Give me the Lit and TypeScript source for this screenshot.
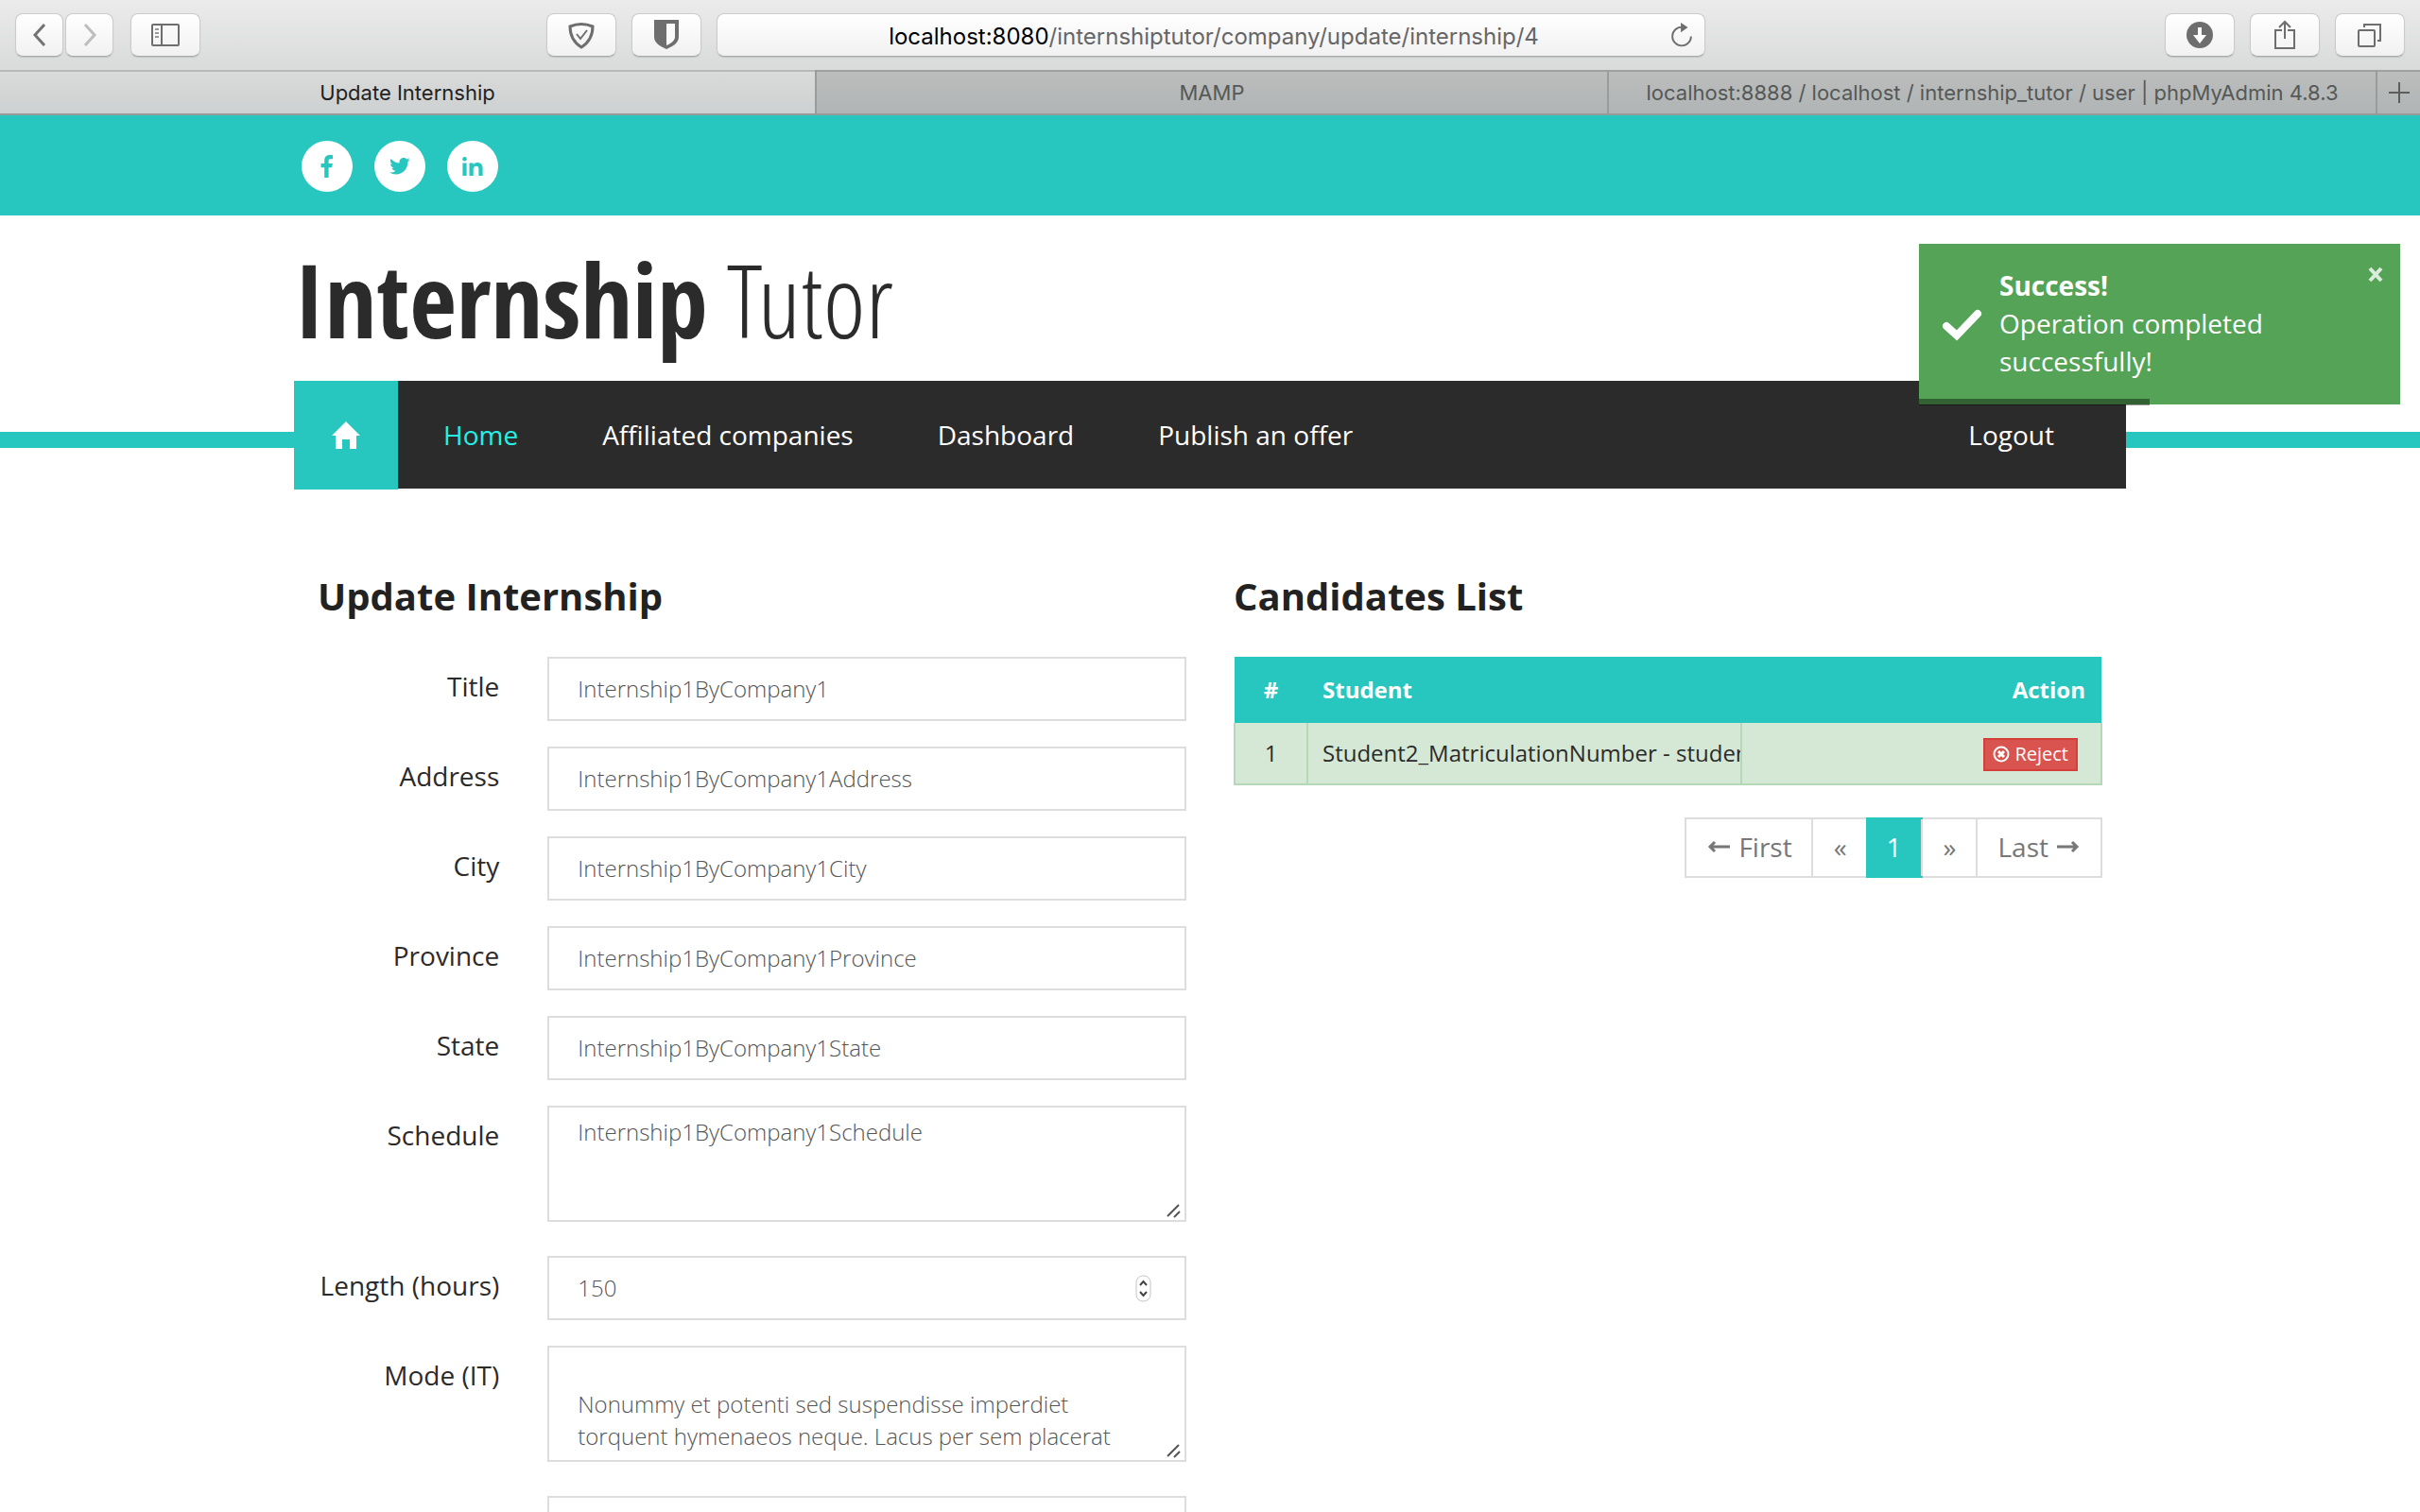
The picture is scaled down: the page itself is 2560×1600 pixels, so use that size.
import { LitElement, html, css, svg } from "lit";
import { customElement } from "lit/decorators.js";
import { classMap } from "lit/directives/class-map.js";

const stroke = (content: unknown, label: string, size = 34) => html`<svg
  class="icon" width=${size} height=${size} viewBox="0 0 34 34" fill="none"
  stroke="#6e6e6e" stroke-width="2" role="img" aria-label=${label}>${content}</svg>`;

@customElement("browser-bar")
class BrowserBar extends LitElement {
  static styles = css`
    :host { display: block; flex: none; font-family: Inter, "Liberation Sans", sans-serif; }
    .toolbar {
      display: grid; grid-template-columns: 562fr 1226fr 740fr; align-items: center;
      height: 76px; box-sizing: border-box; padding: 0 16px;
      background: linear-gradient(#ebebeb, #d9dada); border-bottom: 2px solid #b7b9b8;
    }
    .group { display: flex; gap: 16px; }
    .end { justify-content: flex-end; }
    .pair { display: flex; gap: 2px; margin-right: 2px; }
    .tool, .address {
      height: 46px; box-sizing: border-box; border: 1px solid #cbcbcb; border-bottom-color: #a9a9a9;
      border-radius: 8px; background: linear-gradient(#fff, #f1f1f1);
      box-shadow: 0 1px 1px rgba(0, 0, 0, 0.12);
    }
    .tool { width: 74px; padding: 0; display: grid; place-items: center; }
    .narrow { width: 51px; }
    .address { flex: 1; display: flex; align-items: center; padding: 2px 8px 0 46px; }
    .url { flex: 1; text-align: center; font-size: 24px; color: #666; white-space: nowrap; }
    .host { color: #000; }
    .reload { border: 0; background: none; padding: 0; display: grid; }
    .tabs { display: grid; grid-template-columns: 862fr 838fr 813fr 47fr; height: 46px; border-bottom: 2px solid #979a99; box-sizing: border-box; }
    .tab {
      display: grid; place-items: center; font-size: 22px; color: #555857; text-decoration: none;
      background: linear-gradient(#bcbebd, #b0b4b4); border-left: 2px solid #999c9b;
      white-space: nowrap; overflow: hidden; border-top: 0; border-right: 0; border-bottom: 0; padding: 0;
      margin-top: -2px; padding-top: 2px; box-shadow: inset 0 2px #9fa1a0;
    }
    .current { background: linear-gradient(#d9dada, #ced1d1); color: #222; border-left: 0; box-shadow: none; margin-top: 0; padding-top: 0; }
  `;
  render() {
    return html`
      <div class="toolbar">
        <div class="group">
          <div class="pair">
            <button class="tool narrow" aria-label="Back"><svg width="20" height="28" viewBox="0 0 20 28" fill="none" stroke="#737373" stroke-width="3"><path d="M15 3 5 14l10 11" /></svg></button>
            <button class="tool narrow" aria-label="Forward"><svg width="20" height="28" viewBox="0 0 20 28" fill="none" stroke="#bdbdbd" stroke-width="3"><path d="M5 3l10 11L5 25" /></svg></button>
          </div>
          <button class="tool">${stroke(svg`<rect x="3" y="6" width="28" height="22" rx="1" /><path d="M13 6v22" /><path d="M6 11h4M6 15h4M6 19h4" stroke="#999" />`, "Sidebar")}</button>
        </div>
        <div class="group">
          <button class="tool">${stroke(svg`<path d="M5 8Q17 3 29 8C29 17 25 25 17 30 9 25 5 17 5 8z" stroke-width="3" /><path d="M12 16l4 5 7-9" />`, "Privacy")}</button>
          <button class="tool">${stroke(svg`<path d="M4 1h26v18c0 6-6 10-13 13C10 29 4 25 4 19z" fill="#6e6e6e" stroke="none" /><path d="M17 5h9v14c0 4-4 7-9 9z" fill="#fafafa" stroke="none" />`, "Blocker")}</button>
          <div class="address">
            <span class="url"><span class="host">localhost:8080</span>/internshiptutor/company/update/internship/4</span>
            <button class="reload">${stroke(svg`<path d="M17 7A10.500 10.500 0 1 0 27.500 17.500" /><path d="M16 2v11l8-5.500z" fill="#6e6e6e" stroke="none" />`, "Reload", 32)}</button>
          </div>
        </div>
        <div class="group end">
          <button class="tool">${stroke(svg`<circle cx="17" cy="17" r="14" fill="#6e6e6e" stroke="none" /><path d="M15 9h4v8h5l-7 9-7-9h5z" fill="#fff" stroke="none" />`, "Downloads")}</button>
          <button class="tool">${stroke(svg`<path d="M14 12H7v19h20V12h-7" /><path d="M17 21V3M11 9l6-6 6 6" />`, "Share")}</button>
          <button class="tool">${stroke(svg`<rect x="5" y="12" width="17" height="17" rx="1" /><path d="M11 9V6h17v17h-3" />`, "Show tabs")}</button>
        </div>
      </div>
      <nav class="tabs">
        <a class="tab current" href="#">Update Internship</a>
        <a class="tab" href="#">MAMP</a>
        <a class="tab" href="#">localhost:8888 / localhost / internship_tutor / user | phpMyAdmin 4.8.3</a>
        <button class="tab" aria-label="New tab"><svg width="24" height="24" viewBox="0 0 24 24" stroke="#5c5e5d" stroke-width="2"><path d="M12 1v22M1 12h22" /></svg></button>
      </nav>`;
  }
}

@customElement("site-header")
class SiteHeader extends LitElement {
  static styles = css`
    :host { display: block; }
    .wrap { box-sizing: border-box; max-width: 1938px; margin: 0 auto; }
    .social { background: #27c6bf; }
    .links { display: flex; gap: 23px; padding: 27px 8px 25px; }
    .link { width: 54px; height: 54px; border-radius: 50%; background: #fff; display: grid; place-items: center; }
    .logo {
      display: block; box-sizing: border-box; height: 175px; line-height: 178px; white-space: nowrap;
      font-family: "Open Sans Condensed Light", "OpenSans-CondensedLight", "Open Sans Light Condensed", "Liberation Sans Narrow", sans-serif;
      font-size: 108px; font-weight: 300; color: #2b2b2b; text-decoration: none;
    }
    .strong { font-family: "Open Sans Condensed", "Liberation Sans Narrow", sans-serif; font-weight: 700; }
    .band { background: linear-gradient(#27c6bf, #27c6bf) 0 54px / 100% 17px no-repeat; }
    .menu { display: flex; align-items: stretch; height: 114px; background: #2b2b2b; }
    .home { width: 110px; height: 115px; background: #27c6bf; display: grid; place-items: center; margin-right: 48px; }
    .item { color: #fff; text-decoration: none; font-size: 28px; line-height: 114px; margin-right: 89px; white-space: nowrap; }
    .active { color: #24f0e6; }
    .last { margin: 0 76px 0 auto; }
  `;
  render() {
    const items = ["Home", "Affiliated companies", "Dashboard", "Publish an offer"];
    return html`
      <div class="social"><div class="wrap links">
        <a class="link" href="#" aria-label="Facebook"><svg width="14" height="24" viewBox="0 0 14 24" fill="#27c6bf"><path d="M13 0.200v4h-2.300C9 4.200 8.600 5 8.600 6.200V9h4.200l-.6 4.200H8.600V24H4.200V13.200H.5V9h3.700V5.800C4.200 2.100 6.400 0 9.800 0c1.500 0 2.800.1 3.200.2z" /></svg></a>
        <a class="link" href="#" aria-label="Twitter"><svg width="22" height="18" viewBox="0 0 22 18" fill="#27c6bf"><path d="M21.500 2.200c-.6.900-1.300 1.600-2.200 2.200v.6c0 5.800-4.400 12.500-12.500 12.500-2.500 0-4.800-.7-6.700-2 2.300.3 4.600-.4 6.500-1.800-1.900 0-3.500-1.300-4.100-3 .7.100 1.400.1 2-.1C2.500 10.200 1 8.400 1 6.200c.6.300 1.300.5 2 .6C.9 5.200.4 2.600 1.600.9c2.200 2.600 5.400 4.400 9 4.600C9.900 2.700 12 0 15 0c1.300 0 2.400.5 3.200 1.400 1-.2 1.900-.6 2.800-1.100-.3 1-1 1.900-1.900 2.400.9-.1 1.700-.3 2.400-.5z" /></svg></a>
        <a class="link" href="#" aria-label="LinkedIn"><svg width="22" height="20" viewBox="0 0 22 20" fill="#27c6bf"><circle cx="2.500" cy="2.300" r="2.300" /><path d="M.4 6.400h4.200V20H.4zM7.500 6.400h4.200v2c.8-1.300 2.200-2.300 4.400-2.300 3.200 0 5.500 2.100 5.500 6.300V20h-4.200v-7c0-2-.8-3.200-2.500-3.200-1.900 0-3.200 1.300-3.200 3.200v7H7.500z" /></svg></a>
      </div></div>
      <div class="wrap"><a class="logo" href="#"><span class="strong">Internship</span> Tutor</a></div>
      <div class="band"><nav class="wrap menu">
        <a class="home" href="#" aria-label="Start page"><svg width="30" height="29" viewBox="0 0 30 29" fill="#fff"><path d="M15 0l15 15h-4v14h-7V19h-8v10H4V15H0z" /></svg></a>
        ${items.map((t, i) => html`<a class=${classMap({ item: true, active: i === 0 })} href="#">${t}</a>`)}
        <a class="item last" href="#">Logout</a>
      </nav></div>`;
  }
}

@customElement("success-toast")
class SuccessToast extends LitElement {
  static styles = css`
    :host { display: block; }
    .toast { display: flex; align-items: center; box-sizing: border-box; height: 170px; padding: 0 18px 0 24px; background: #54a356; color: #fff; }
    .tick { flex: none; }
    .body { flex: 1; margin: 0 60px 0 18px; padding-bottom: 3px; font-size: 28px; line-height: 40px; }
    .title { display: block; font-weight: 700; }
    .close { align-self: flex-start; margin-top: 24px; border: 0; padding: 0; background: none; display: grid; }
    .progress { display: block; width: 48%; height: 7px; margin-top: -6px; background: rgba(0, 0, 0, 0.4); }
  `;
  render() {
    return html`<div class="toast" role="status">
        <svg class="tick" width="43" height="36" viewBox="0 0 43 36" fill="none" stroke="#fff" stroke-width="8"><path d="M5 20l11 10L38 7" stroke-linecap="round" /></svg>
        <div class="body"><strong class="title">Success!</strong>Operation completed successfully!</div>
        <button class="close" aria-label="Close"><svg width="16" height="17" viewBox="0 0 16 17" stroke="#dcecdc" stroke-width="4"><path d="M2 2l12 13M14 2L2 15" /></svg></button>
      </div><div class="progress"></div>`;
  }
}

type Field = { id: string; label: string; value: string; kind: "text" | "area" | "number" };

const FIELDS: Field[] = [
  { id: "title", label: "Title", value: "Internship1ByCompany1", kind: "text" },
  { id: "address", label: "Address", value: "Internship1ByCompany1Address", kind: "text" },
  { id: "city", label: "City", value: "Internship1ByCompany1City", kind: "text" },
  { id: "province", label: "Province", value: "Internship1ByCompany1Province", kind: "text" },
  { id: "state", label: "State", value: "Internship1ByCompany1State", kind: "text" },
  { id: "schedule", label: "Schedule", value: "Internship1ByCompany1Schedule", kind: "area" },
  { id: "length", label: "Length (hours)", value: "150", kind: "number" },
  { id: "mode-it", label: "Mode (IT)", value: "\nNonummy et potenti sed suspendisse imperdiet torquent hymenaeos neque. Lacus per sem placerat habitasse id.", kind: "area" },
  { id: "mode-en", label: "", value: "", kind: "area" },
];

@customElement("internship-form")
class InternshipForm extends LitElement {
  static styles = css`
    :host { display: block; }
    .heading { margin: 0 25px; font-size: 40px; line-height: 56px; font-weight: 700; color: #222; }
    .form { margin-top: 36px; }
    .row { display: grid; grid-template-columns: 25% 1fr; margin-bottom: 27px; }
    .tall { margin-bottom: 36px; }
    .label { padding: 11px 25px 0 0; text-align: right; font-size: 28px; line-height: 40px; white-space: nowrap; }
    .cell { position: relative; margin: 0 25px 0 26px; display: grid; }
    .box {
      box-sizing: border-box; width: 100%; height: 68px; padding: 0 30px 2px; margin: 0; border: 2px solid #ddd; border-radius: 0;
      background: #fff; color: #555; font: 300 24px/34px "Open Sans", sans-serif; outline: 0; appearance: textfield;
    }
    .area { height: 123px; padding: 9px 30px 8px; resize: none; overflow: hidden; }
    .box::-webkit-inner-spin-button { display: none; }
    .grip { position: absolute; right: 4px; bottom: 4px; pointer-events: none; }
    .spin { position: absolute; right: 37px; top: 20px; pointer-events: none; }
  `;
  control(f: Field) {
    if (f.kind === "area") {
      return html`<textarea class="box area" id=${f.id} .value=${f.value}></textarea>
        <svg class="grip" width="18" height="16" viewBox="0 0 18 16" stroke="#555" stroke-width="2"><path d="M2 14L14 2M9 15l6-6" /></svg>`;
    }
    if (f.kind === "number") {
      return html`<input class="box" id=${f.id} type="number" .value=${f.value} />
        <svg class="spin" width="17" height="29" viewBox="0 0 17 29" fill="none"><rect x="1" y="1" width="15" height="27" rx="7" fill="#fff" stroke="#c4c4c4" /><path d="M5 11l3.500-4 3.500 4M5 18l3.500 4 3.500-4" stroke="#444" stroke-width="2" /></svg>`;
    }
    return html`<input class="box" id=${f.id} type="text" .value=${f.value} />`;
  }
  render() {
    return html`<h2 class="heading">Update Internship</h2>
      <form class="form">${FIELDS.map((f) => html`
        <div class=${classMap({ row: true, tall: f.kind === "area" })}>
          <label class="label" for=${f.id}>${f.label}</label>
          <div class="cell">${this.control(f)}</div>
        </div>`)}</form>`;
  }
}

@customElement("candidates-list")
class CandidatesList extends LitElement {
  static styles = css`
    :host { display: block; padding: 0 25px; }
    .heading { margin: 0; font-size: 40px; line-height: 56px; font-weight: 700; color: #222; }
    .table { width: 100%; margin-top: 36px; border-collapse: collapse; table-layout: fixed; font-size: 24px; line-height: 34px; }
    .th { height: 70px; padding: 0 17px 0 16px; box-sizing: border-box; background: #27c6bf; color: #fff; text-align: left; font-weight: 700; }
    .td { height: 64px; padding: 0 15px; background: #d5e8d5; border: 2px solid #b5d8b6; border-top: 0; white-space: nowrap; overflow: hidden; }
    .name { padding-right: 0; }
    .num { width: 77px; padding: 0; text-align: center; }
    .who { width: 50%; }
    .act { text-align: right; }
    .tdact { text-align: right; padding-right: 24px; }
    .reject { display: inline-flex; align-items: center; gap: 5px; height: 35px; padding: 0 8px; border: 2px solid #d43f3a; background: #d9534f; color: #fff; font: 20px/28px "Open Sans", sans-serif; vertical-align: middle; }
    .pages { display: flex; width: max-content; margin: 34px 0 0 auto; border: 2px solid #ddd; }
    .page { padding: 0 22px; margin: 0 0 0 -2px; border-left: 2px solid #ddd; font-size: 28px; line-height: 58px; padding-bottom: 2px; color: #777; text-decoration: none; display: flex; align-items: center; gap: 9px; }
    .current { margin: -2px 0 -2px -2px; border: 0; background: #27c6bf; color: #fff; }
  `;
  render() {
    const arrow = (d: string) => html`<svg width="24" height="16" viewBox="0 0 24 16" fill="none" stroke="#777" stroke-width="3"><path d=${d} /></svg>`;
    return html`<h2 class="heading">Candidates List</h2>
      <table class="table">
        <thead><tr><th class="th num">#</th><th class="th who">Student</th><th class="th act">Action</th></tr></thead>
        <tbody><tr>
          <td class="td num">1</td>
          <td class="td name">Student2_MatriculationNumber - student2</td>
          <td class="td tdact"><button class="reject"><svg width="18" height="18" viewBox="0 0 18 18" fill="none" stroke="#fff"><circle cx="9" cy="9" r="7.500" stroke-width="2" /><path d="M6 6l6 6M12 6l-6 6" stroke-width="3" /></svg>Reject</button></td>
        </tr></tbody>
      </table>
      <nav class="pages" aria-label="Pages">
        <a class="page" href="#">${arrow("M24 8H3M8 3L3 8l5 5")}First</a>
        <a class="page" href="#">«</a>
        <a class="page current" href="#">1</a>
        <a class="page" href="#">»</a>
        <a class="page" href="#">Last${arrow("M0 8h21M16 3l5 5-5 5")}</a>
      </nav>`;
  }
}

@customElement("app-root")
class AppRoot extends LitElement {
  static styles = css`
    :host { display: flex; flex-direction: column; height: 100vh; background: #fff; color: #2b2b2b; font-family: "Open Sans", sans-serif; }
    .page { position: relative; flex: 1; min-height: 0; overflow: hidden; }
    .main { display: grid; grid-template-columns: 1fr 1fr; max-width: 1938px; margin: 0 auto; padding-top: 86px; align-items: start; }
    .toast { position: absolute; top: 136px; right: 21px; width: 509px; }
  `;
  render() {
    return html`<browser-bar></browser-bar>
      <div class="page">
        <site-header></site-header>
        <main class="main"><internship-form></internship-form><candidates-list></candidates-list></main>
        <success-toast class="toast"></success-toast>
      </div>`;
  }
}
